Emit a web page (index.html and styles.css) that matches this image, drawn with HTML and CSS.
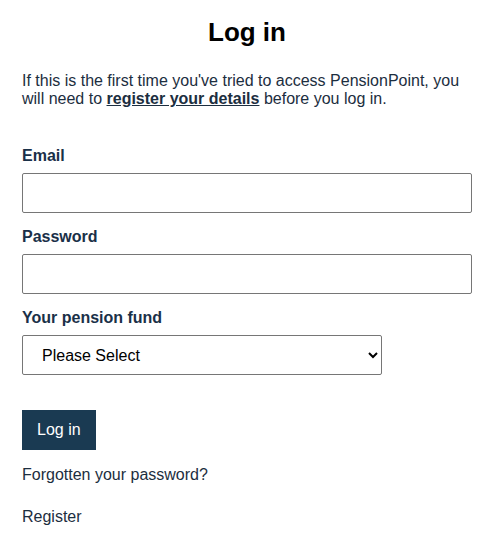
FILE: index.html
```html
<!DOCTYPE html>
<html lang="en">
<head>
<meta charset="utf-8">
<title>Log in</title>
<link rel="stylesheet" href="styles.css">
</head>
<body>
<main class="page">
  <h1 class="title">Log in</h1>
  <p class="intro">If this is the first time you've tried to access PensionPoint, you will need to <a class="intro-link" href="#">register your details</a> before you log in.</p>
  <form class="login-form">
    <label class="field-label" for="email">Email</label>
    <input class="text-input" id="email" type="email">
    <label class="field-label" for="password">Password</label>
    <input class="text-input" id="password" type="password">
    <label class="field-label" for="fund">Your pension fund</label>
    <select class="select-input" id="fund">
      <option>Please Select</option>
    </select>
    <button class="submit-btn" type="button">Log in</button>
  </form>
  <a class="plain-link forgot" href="#">Forgotten your password?</a>
  <a class="plain-link register" href="#">Register</a>
</main>
</body>
</html>
```
FILE: styles.css
```css
html, body {
  margin: 0;
  padding: 0;
  background: #ffffff;
}

body {
  font-family: "Liberation Sans", Arial, sans-serif;
  font-size: 16px;
  color: #1c2e40;
}

.page {
  width: 450px;
  padding: 17px 0 0 22px;
  display: flex;
  flex-direction: column;
}

.title {
  margin: 0;
  font-size: 26px;
  font-weight: bold;
  color: #000000;
  text-align: center;
  line-height: normal;
}

.intro {
  margin: 24px 0 0;
  line-height: normal;
}

.intro-link {
  color: #1c2e40;
  font-weight: bold;
  text-decoration: underline;
}

.login-form {
  margin-top: 38px;
  display: flex;
  flex-direction: column;
  align-items: flex-start;
}

.field-label {
  display: block;
  font-weight: bold;
  line-height: 18px;
  padding-top: 1px;
  margin-bottom: 8px;
  color: #1a3048;
}

.text-input {
  box-sizing: border-box;
  width: 450px;
  height: 40px;
  margin: 0 0 14px;
  border: 1px solid #767676;
  border-radius: 2px;
  padding: 0 10px;
  font: 16px "Liberation Sans", Arial, sans-serif;
  background: #fff;
}

.select-input {
  box-sizing: border-box;
  width: 360px;
  height: 40px;
  margin: 0;
  border: 1px solid #767676;
  border-radius: 2px;
  padding: 0 6px 0 15px;
  font: 16px "Liberation Sans", Arial, sans-serif;
  color: #000;
  background: #fff;
}

.submit-btn {
  margin-top: 35px;
  height: 40px;
  padding: 0 15px;
  border: none;
  border-radius: 0;
  background: #1a3a52;
  color: #ffffff;
  font: 16px "Liberation Sans", Arial, sans-serif;
  cursor: pointer;
}

.plain-link {
  color: #1c2e40;
  text-decoration: none;
  line-height: normal;
  align-self: flex-start;
}

.forgot {
  margin-top: 16px;
}

.register {
  margin-top: 24px;
}
```
